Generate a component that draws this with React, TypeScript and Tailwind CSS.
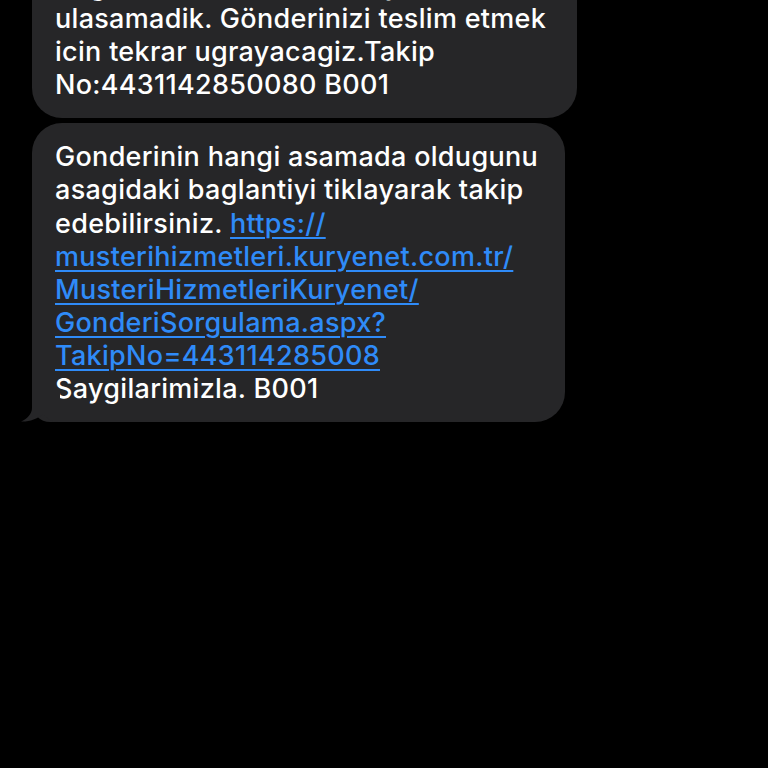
import React from 'react';

const linkLines = [
  'musterihizmetleri.kuryenet.com.tr/',
  'MusteriHizmetleriKuryenet/',
  'GonderiSorgulama.aspx?',
  'TakipNo=443114285008',
];

function Tail() {
  return (
    <svg
      className="absolute left-[-12px] bottom-0"
      width="40"
      height="30"
      viewBox="0 0 40 30"
    >
      <path
        d="M12 0 L12 16 C12 22 7 27 1 29.5 C9 30 17 27 23 22 C27 26 31 30 38 30 L40 30 L40 0 Z"
        fill="#262628"
      />
    </svg>
  );
}

export default function App() {
  return (
    <div
      className="w-[768px] h-[768px] overflow-hidden bg-black text-white"
      style={{ fontFamily: 'Inter, "Noto Sans", sans-serif' }}
    >
      <div className="flex flex-col gap-[5px] pl-[32px] text-[27px] font-medium leading-[33.1px] tracking-[0.3px]">
        {/* first bubble, top cut off */}
        <div className="mt-[-48px] w-[545px] rounded-[30px] bg-[#262628] pl-[23px] pr-3 pt-[17px] pb-[17px]">
          <div>Bugün adresinizde kimseye</div>
          <div className="whitespace-nowrap">ulasamadik. Gönderinizi teslim etmek</div>
          <div>icin tekrar ugrayacagiz.Takip</div>
          <div>No:4431142850080 B001</div>
        </div>

        {/* second bubble */}
        <div className="relative w-[533px] rounded-[30px] rounded-bl-[18px] bg-[#262628] pl-[23px] pr-3 pt-[17px] pb-[17px]">
          <div className="whitespace-nowrap">Gonderinin hangi asamada oldugunu</div>
          <div className="whitespace-nowrap">asagidaki baglantiyi tiklayarak takip</div>
          <div className="whitespace-nowrap">
            edebilirsiniz.{' '}
            <span className="text-[#2f8bf8] underline decoration-2 underline-offset-[4px]">https://</span>
          </div>
          {linkLines.map(l => (
            <div key={l} className="whitespace-nowrap">
              <span className="text-[#2f8bf8] underline decoration-2 underline-offset-[4px]">{l}</span>
            </div>
          ))}
          <div>Saygilarimizla. B001</div>
          <Tail />
        </div>
      </div>
    </div>
  );
}
